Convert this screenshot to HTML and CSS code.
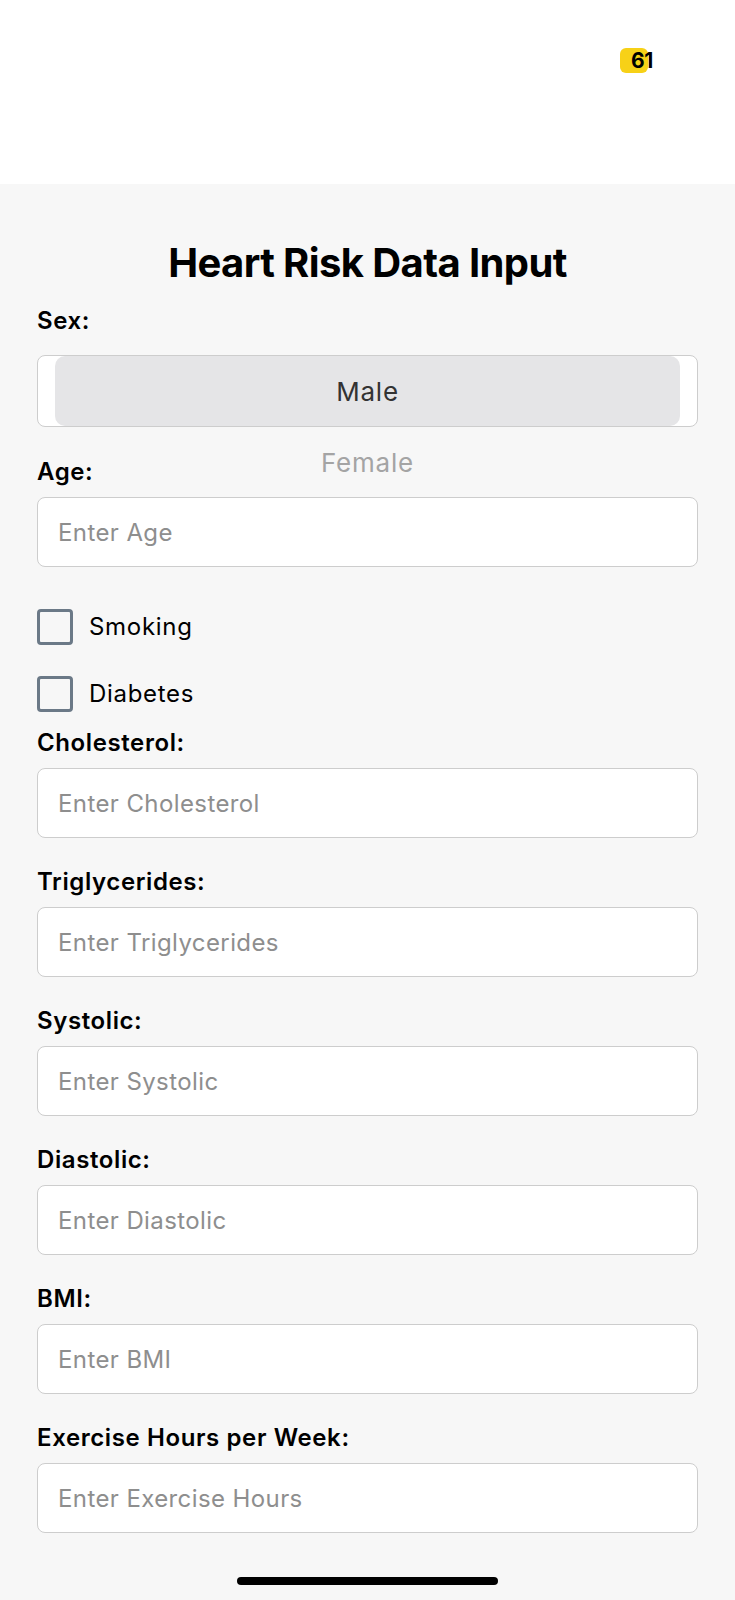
FILE: index.html
```html
<!DOCTYPE html>
<html lang="en">
<head>
<meta charset="utf-8">
<title>Heart Risk Data Input</title>
<link rel="stylesheet" href="styles.css">
</head>
<body>
<header class="status">
  <span class="badge">61</span>
</header>
<main class="form">
  <h1 class="title">Heart Risk Data Input</h1>

  <label class="label label-sex">Sex:</label>
  <div class="picker">
    <div class="wheel">
      <div class="opt opt-selected">Male</div>
      <div class="opt opt-next">Female</div>
    </div>
  </div>

  <label class="label label-age" for="age">Age:</label>
  <input class="field" id="age" type="text" placeholder="Enter Age">

  <div class="checks">
    <label class="check"><input type="checkbox" class="box"><span>Smoking</span></label>
    <label class="check"><input type="checkbox" class="box"><span>Diabetes</span></label>
  </div>

  <label class="label" for="chol">Cholesterol:</label>
  <input class="field" id="chol" type="text" placeholder="Enter Cholesterol">

  <label class="label" for="trig">Triglycerides:</label>
  <input class="field" id="trig" type="text" placeholder="Enter Triglycerides">

  <label class="label" for="sys">Systolic:</label>
  <input class="field" id="sys" type="text" placeholder="Enter Systolic">

  <label class="label" for="dia">Diastolic:</label>
  <input class="field" id="dia" type="text" placeholder="Enter Diastolic">

  <label class="label" for="bmi">BMI:</label>
  <input class="field" id="bmi" type="text" placeholder="Enter BMI">

  <label class="label" for="ex">Exercise Hours per Week:</label>
  <input class="field field-last" id="ex" type="text" placeholder="Enter Exercise Hours">

  <div class="home"><span class="home-bar"></span></div>
</main>
</body>
</html>
```

FILE: styles.css
```css
* { box-sizing: border-box; }

html, body {
  margin: 0;
  padding: 0;
}

body {
  background: #f7f7f7;
  font-family: Inter, "Noto Sans", "Liberation Sans", sans-serif;
  color: #000;
  width: 735px;
  height: 1600px;
  overflow: hidden;
}

.status {
  background: #ffffff;
  height: 184px;
  display: flex;
  justify-content: flex-start;
  align-items: flex-start;
  padding: 48px 0 0 620px;
}

.badge {
  display: block;
  width: 28px;
  height: 25px;
  background: #f7d117;
  border-radius: 6px;
  padding-left: 11px;
  font-size: 21px;
  font-weight: 700;
  line-height: 25px;
  white-space: nowrap;
  letter-spacing: -0.5px;
  color: #000;
}

.form {
  display: flex;
  flex-direction: column;
  padding: 55px 37px 0 37px;
}

.title {
  margin: 0 0 20px 0;
  font-size: 40px;
  line-height: 48px;
  font-weight: 700;
  text-align: center;
  letter-spacing: -0.6px;
}

.label {
  display: block;
  font-size: 24px;
  line-height: 28px;
  font-weight: 600;
  margin: 0 0 11px 0;
  letter-spacing: 0.6px;
}

.label-sex {
  margin-bottom: 20px;
}

.picker {
  height: 72px;
  background: #ffffff;
  border: 1.5px solid #cdcdcd;
  border-radius: 8px;
  padding: 0 17px;
}

.wheel {
  display: flex;
  flex-direction: column;
}

.opt {
  height: 72px;
  display: flex;
  align-items: center;
  justify-content: center;
  font-size: 26px;
  font-weight: 400;
  letter-spacing: 0.8px;
}

.opt-selected {
  height: 70px;
  background: #e5e5e7;
  border-radius: 10px;
  color: #333333;
}

.opt-next {
  color: #a4a4a4;
}

.label-age {
  margin-top: 31px;
}

.field {
  display: block;
  width: 100%;
  height: 70px;
  background: #ffffff;
  border: 1.5px solid #cdcdcd;
  border-radius: 8px;
  padding: 0 0 0 20px;
  font-family: inherit;
  font-size: 24px;
  letter-spacing: 0.4px;
  color: #000;
  margin: 0 0 30px 0;
  outline: none;
}

.field::placeholder {
  color: #8e8e8e;
}

.label-age + .field {
  margin-bottom: 42px;
}

.checks {
  display: flex;
  flex-direction: column;
  gap: 31px;
  margin-bottom: 17px;
}

.check {
  display: flex;
  align-items: center;
  gap: 16px;
  font-size: 24px;
  font-weight: 400;
  line-height: 36px;
  letter-spacing: 0.7px;
}

.box {
  appearance: none;
  -webkit-appearance: none;
  margin: 0;
  width: 36px;
  height: 36px;
  border: 3px solid #6b7987;
  border-radius: 4px;
  background: transparent;
}

.field-last {
  margin-bottom: 0;
}

.home {
  display: flex;
  justify-content: center;
  margin-top: 44px;
}

.home-bar {
  display: block;
  width: 261px;
  height: 8px;
  border-radius: 4px;
  background: #000;
}
```
